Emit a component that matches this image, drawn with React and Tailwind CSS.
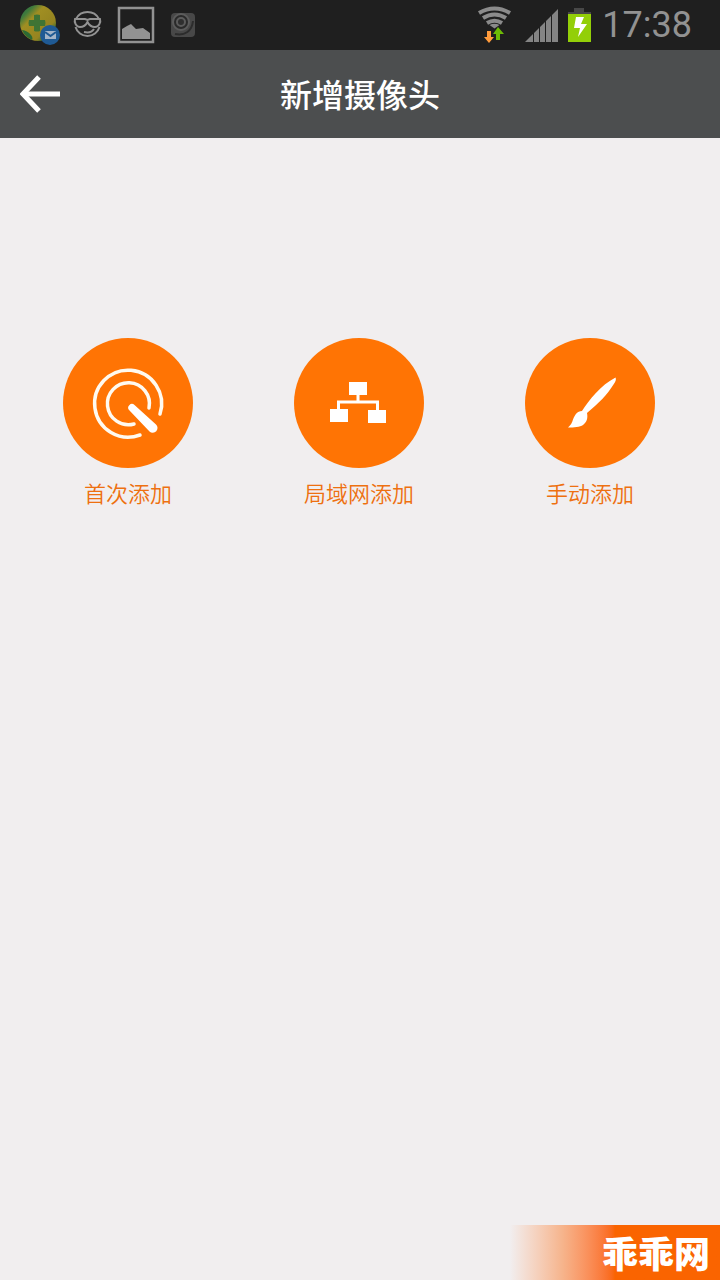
const statusIcons = (
  <svg className="h-[50px] w-[200px]" viewBox="0 0 200 50" aria-hidden="true">
    <defs>
      <linearGradient id="ball" x1="0" y1="0" x2="1" y2="1">
        <stop offset="0" stopColor="#2c6a48" />
        <stop offset="0.2" stopColor="#3f7a3c" />
        <stop offset="0.35" stopColor="#a08e22" />
        <stop offset="0.7" stopColor="#958420" />
        <stop offset="0.85" stopColor="#2c6a34" />
        <stop offset="1" stopColor="#1f5a34" />
      </linearGradient>
    </defs>
    {/* security shield ball with mail badge */}
    <circle cx="38" cy="23" r="18" fill="url(#ball)" />
    <path d="M22 30c2 5 6 8 10 10 2-3-3-9-10-10z" fill="#2c6a34" />
    <path d="M34 15q3-1 6 0v5h5q1 3 0 6h-5v5q-3 1-6 0v-5h-5q-1-3 0-6h5z" fill="#3f7434" />
    <circle cx="50" cy="35" r="10" fill="#1f5a94" />
    <path d="M45 31h11v8H45z" fill="#a3b4c8" />
    <path d="M45 32l5.500 4L56 32" stroke="#1f5a94" strokeWidth="2" fill="none" />

    {/* face with sunglasses */}
    <g fill="none" stroke="#929292" strokeWidth="2">
      <path d="M76 19a13 13 0 0 1 23 0M75.500 27a12.500 12.500 0 0 0 24 0" />
      <path d="M75 19h10l2.500 1 2.500-1h10c1 3-1 8-5 8s-6-2-7.500-5c-1.500 3-3.500 5-7.500 5s-6-5-5-8z" />
      <path d="M84 32c4 1 8 0 10-3" />
    </g>

    {/* picture */}
    <rect x="119" y="8" width="34" height="34" fill="none" stroke="#929292" strokeWidth="2.500" />
    <path d="M122 39v-10l5-3 4-2 5 5 7-1 7 5v6z" fill="#929292" />

    {/* camera */}
    <rect x="171" y="13" width="24" height="24" rx="4" fill="#484848" />
    <circle cx="181" cy="22" r="8" fill="#2a2a2a" stroke="#5c5c5c" strokeWidth="2" />
    <circle cx="181" cy="22" r="4" fill="#2f2f2f" stroke="#5c5c5c" strokeWidth="2" />
    <path d="M175 34c10 2 17-3 18-13" stroke="#2c2c2c" strokeWidth="2" fill="none" />
  </svg>
)

const signalIcons = (
  <svg className="h-[50px] w-[120px]" viewBox="476 0 120 50" aria-hidden="true">
    <g fill="none" stroke="#8b8b8b" strokeWidth="4">
      <path d="M479 13q15.500-9 31 0" />
      <path d="M483 18q11.500-7 23 0" />
      <path d="M487 23q7.500-4.500 15 0" />
    </g>
    <path d="M489.500 25q5-2.500 10 0l-5 3.500z" fill="#8b8b8b" />
    <path d="M487 31h4v6h3l-5 6-5-6h3z" fill="#ff9b3c" />
    <path d="M496 40h4v-6h4l-6-7-5 7h3z" fill="#6dbb05" />
    <path d="M525 42l8-8v8zM534 33l5-5v14h-5zM540 27l5-5v20h-5zM546 21l5-5v26h-5zM552 15l6-6v33h-6z" fill="#848484" />
    <path d="M574 8h10v4h7v3h-23v-3h6z" fill="#484848" />
    <path d="M568 14h23v28h-23z" fill="#93cf08" />
    <path d="M576 17h8l-3 7h6l-9 13 2-9h-6z" fill="#fff" />
  </svg>
)

function ScanIcon() {
  return (
    <svg className="size-full" viewBox="0 0 130 130" aria-hidden="true">
      <g fill="none" stroke="#fffaf0" strokeWidth="3.500" strokeLinecap="round">
        <path d="M77 97A33.500 33.500 0 1 1 97 76" />
        <path d="M71 86A21 21 0 1 1 86 70" />
      </g>
      <path d="M66.500 72.500a3.700 3.700 0 0 1 5-5.500L93 86.500a4.700 4.700 0 0 1-6.500 7z" fill="#fff" />
    </svg>
  )
}

function NetworkIcon() {
  return (
    <svg className="size-full" viewBox="0 0 130 130" aria-hidden="true">
      <path d="M55 44h18v13H55zM36 71h18v13H36zM74 72h18v13H74z" fill="#fff" />
      <path d="M64 57v7M44.500 72v-8h39v8" fill="none" stroke="#fff" strokeWidth="3" />
    </svg>
  )
}

function BrushIcon() {
  return (
    <svg className="size-full" viewBox="0 0 130 130" aria-hidden="true">
      <path
        d="M90.500 39.500c1 2 0 4-2 7C82 57 74 65 62 75c1 5 0 9-4 12-3 2-9 2.500-15 2.500 3-2.500 4-5 5-8 2-5 4-8 9-8.500C64 62 76 47 90.500 39.500z"
        fill="#fff"
      />
    </svg>
  )
}

const methods = [
  { id: 'first', label: '首次添加', Icon: ScanIcon },
  { id: 'lan', label: '局域网添加', Icon: NetworkIcon },
  { id: 'manual', label: '手动添加', Icon: BrushIcon },
]

export default function App() {
  return (
    <div className="relative flex min-h-screen flex-col bg-[#f1eeef] font-['Noto_Sans_CJK_SC',sans-serif]">
      <div className="flex h-[50px] items-center bg-[#1f1f1f]">
        {statusIcons}
        <div className="ml-auto flex items-center gap-[6px] pr-7">
          {signalIcons}
          <span className="font-[Roboto,sans-serif] text-[36px] leading-[50px] text-[#929292]">17:38</span>
        </div>
      </div>

      <header className="grid h-[88px] grid-cols-[80px_1fr_80px] items-center bg-[#4c4e4f]">
        <button type="button" aria-label="返回" className="flex h-full items-center pl-5">
          <svg className="h-10 w-10" viewBox="0 0 40 40" fill="none" stroke="#fff" aria-hidden="true">
            <path d="M3 20h37" strokeWidth="5" />
            <path d="M19 3L3 20l16 17" strokeWidth="5" />
          </svg>
        </button>
        <h1 className="pb-[2px] text-center text-[32px] leading-10 font-medium text-white">新增摄像头</h1>
      </header>

      <main className="flex justify-between pt-[200px] pr-[65px] pl-[63px]">
        {methods.map(({ id, label, Icon }) => (
          <button key={id} type="button" className="flex w-[130px] flex-col items-center gap-[10px]">
            <span className="size-[130px] rounded-full bg-[#ff7404]">
              <Icon />
            </span>
            <span className="text-[22px] leading-7 font-[350] text-[#ee7010]">{label}</span>
          </button>
        ))}
      </main>

      <div className="absolute right-0 bottom-0 flex h-[55px] w-[210px] items-center justify-end bg-linear-to-r from-[#f1eeef] via-[#f6b48c] via-25% to-[#fa6400] to-50% pr-[10px]">
        <span className="text-[36px] leading-[55px] font-black text-white">乖乖网</span>
      </div>
    </div>
  )
}
